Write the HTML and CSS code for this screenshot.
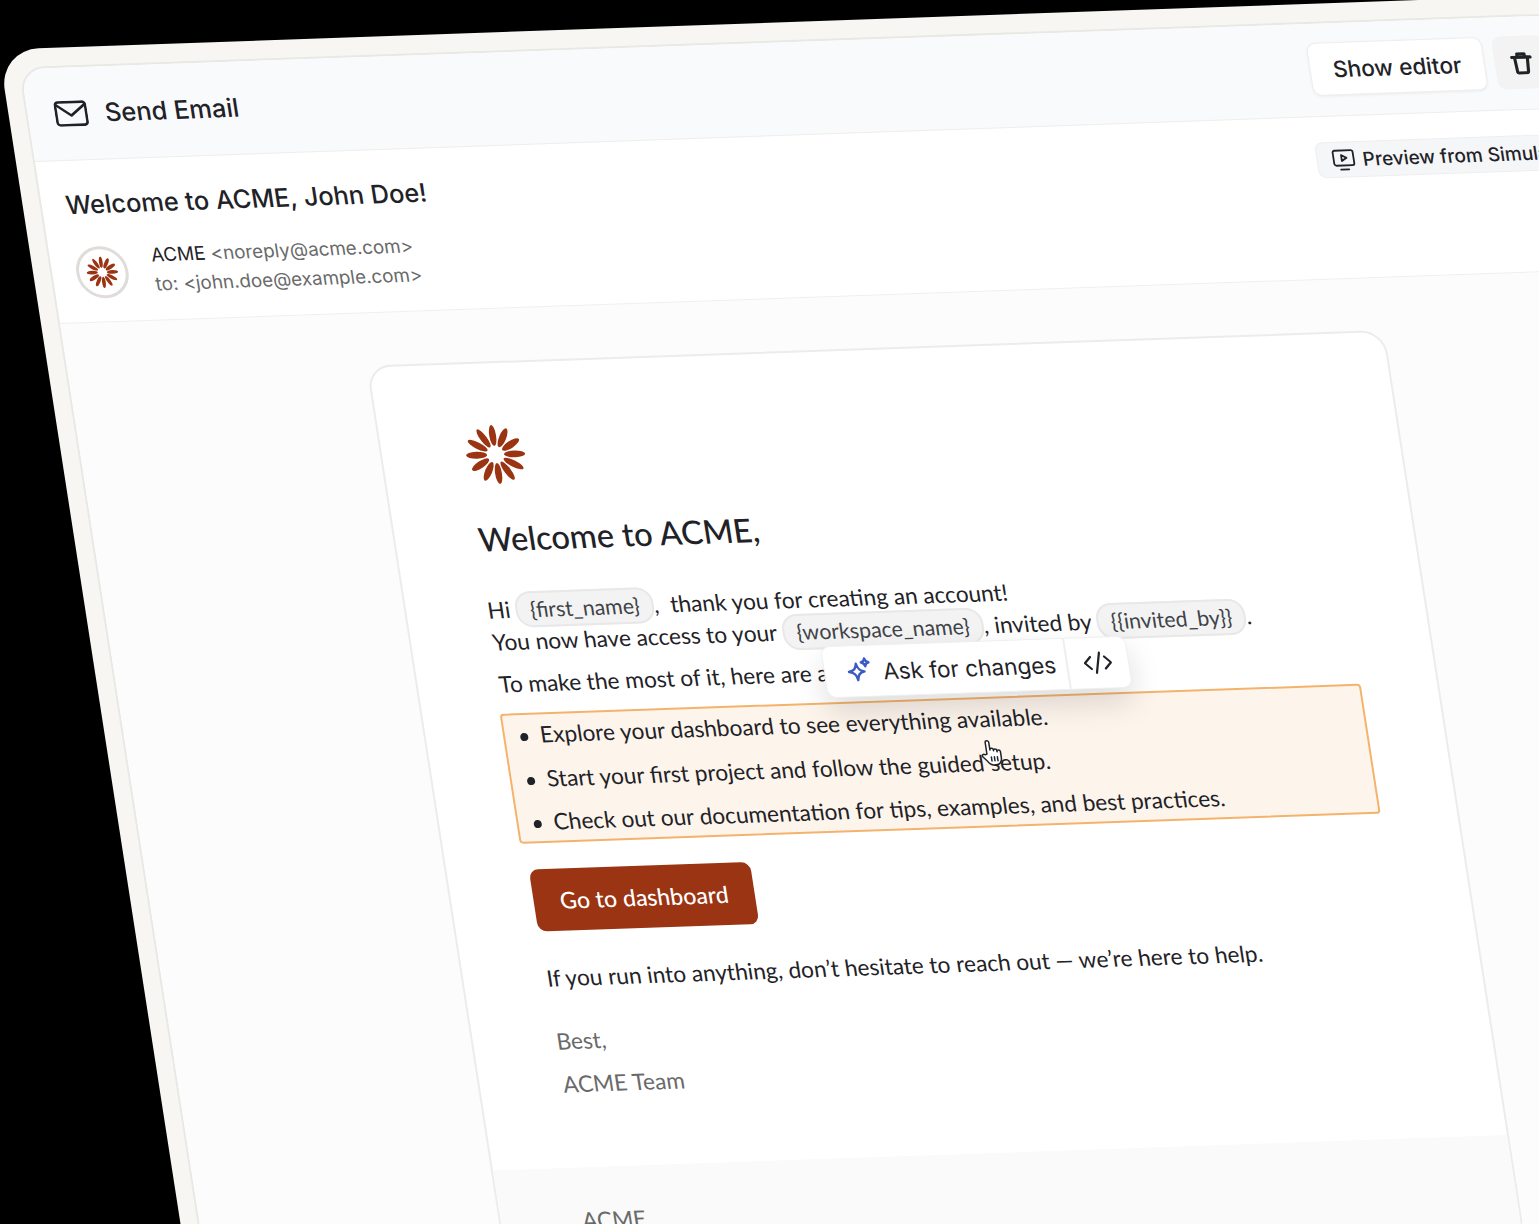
FILE: index.html
```html
<!DOCTYPE html>
<html lang="en">

<head>
    <meta charset="UTF-8">
    <meta name="viewport" content="width=device-width, initial-scale=1.0">
    <title>Send Email</title>
    <link rel="stylesheet" href="styles.css">
</head>

<body>
    <svg class="defs" width="0" height="0">
        <symbol id="flower" viewBox="0 0 60 60">
            <g fill="#9a3412">
                <ellipse cx="30" cy="11" rx="3.4" ry="10.5"/>
                <ellipse cx="30" cy="11" rx="3.4" ry="10.5" transform="rotate(30 30 30)"/>
                <ellipse cx="30" cy="11" rx="3.4" ry="10.5" transform="rotate(60 30 30)"/>
                <ellipse cx="30" cy="11" rx="3.4" ry="10.5" transform="rotate(90 30 30)"/>
                <ellipse cx="30" cy="11" rx="3.4" ry="10.5" transform="rotate(120 30 30)"/>
                <ellipse cx="30" cy="11" rx="3.4" ry="10.5" transform="rotate(150 30 30)"/>
                <ellipse cx="30" cy="11" rx="3.4" ry="10.5" transform="rotate(180 30 30)"/>
                <ellipse cx="30" cy="11" rx="3.4" ry="10.5" transform="rotate(210 30 30)"/>
                <ellipse cx="30" cy="11" rx="3.4" ry="10.5" transform="rotate(240 30 30)"/>
                <ellipse cx="30" cy="11" rx="3.4" ry="10.5" transform="rotate(270 30 30)"/>
                <ellipse cx="30" cy="11" rx="3.4" ry="10.5" transform="rotate(300 30 30)"/>
                <ellipse cx="30" cy="11" rx="3.4" ry="10.5" transform="rotate(330 30 30)"/>
            </g>
        </symbol>
    </svg>

    <div class="stage">
        <div class="panel">
            <header class="panel-head">
                <div class="panel-title">
                    <svg class="mail-icon" viewBox="0 0 33 26" fill="none" stroke="#1f2328" stroke-width="2.6" stroke-linejoin="round" stroke-linecap="round">
                        <rect x="1.5" y="1.5" width="30" height="23" rx="3"/>
                        <path d="M2 4l14.500 11L31 4"/>
                    </svg>
                    <span>Send Email</span>
                </div>
                <div class="panel-actions">
                    <button class="btn-editor">Show editor</button>
                    <button class="btn-trash">
                        <svg viewBox="0 0 24 26" fill="none" stroke="#1f2328" stroke-width="3.4" stroke-linejoin="round" stroke-linecap="round">
                            <path d="M2 7h20"/>
                            <path d="M8 6V3.500h8V6"/>
                            <path d="M5 7l1 15a2 2 0 0 0 2 2h8a2 2 0 0 0 2-2l1-15"/>
                        </svg>
                    </button>
                </div>
            </header>

            <section class="mail-meta">
                <h1 class="mail-subject">Welcome to ACME, John Doe!</h1>
                <div class="mail-from">
                    <div class="avatar">
                        <svg class="avatar-logo"><use href="#flower"/></svg>
                    </div>
                    <div class="from-lines">
                        <p>ACME <span class="muted">&lt;noreply@acme.com&gt;</span></p>
                        <p class="muted">to: &lt;john.doe@example.com&gt;</p>
                    </div>
                </div>
                <button class="btn-preview">
                    <svg viewBox="0 0 24 24" fill="none" stroke="#1f2328" stroke-width="1.800" stroke-linejoin="round" stroke-linecap="round">
                        <rect x="2" y="3" width="20" height="15" rx="2"/>
                        <path d="M10 7.500l5 3-5 3z"/>
                        <path d="M8 22h8"/>
                    </svg>
                    Preview from Simulation
                </button>
            </section>

            <section class="canvas">
                <article class="card">
                    <div class="card-body">
                        <svg class="logo"><use href="#flower"/></svg>
                        <h2 class="greeting">Welcome to ACME,</h2>
                        <p class="line-group">Hi <span class="chip">{first_name}</span>, &nbsp;thank you for creating an account!<br>
                            You now have access to your <span class="chip">{workspace_name}</span>, invited by <span class="chip">{{invited_by}}</span>.</p>
                        <p class="line-tips">To make the most of it, here are a few things to try:</p>
                        <ul class="tips">
                            <li>Explore your dashboard to see everything available.</li>
                            <li>Start your first project and follow the guided setup.</li>
                            <li>Check out our documentation for tips, examples, and best practices.</li>
                        </ul>
                        <a class="btn-go" href="#">Go to dashboard</a>
                        <p class="line-help">If you run into anything, don’t hesitate to reach out — we’re here to help.</p>
                        <p class="sign">Best,</p>
                        <p class="sign sign-team">ACME Team</p>

                        <div class="ask-bar">
                            <div class="ask-main">
                                <svg viewBox="0 0 28 28" fill="none" stroke="#3b5bc4" stroke-width="2.400" stroke-linejoin="round">
                                    <path d="M12 6.500c.8 5 2.600 7 7.500 8-4.900 1-6.700 3-7.500 8.500-.8-5.500-2.600-7.500-8-8.500 5.400-1 7.200-3 8-8z"/>
                                    <path d="M21 1.500c.4 2.500 1.300 3.500 3.800 4-2.500.5-3.400 1.500-3.800 4-.4-2.500-1.300-3.500-3.800-4 2.500-.5 3.400-1.500 3.800-4z"/>
                                </svg>
                                <span>Ask for changes</span>
                            </div>
                            <div class="ask-code">
                                <svg viewBox="0 0 28 24" fill="none" stroke="#1f2328" stroke-width="2.200" stroke-linecap="round" stroke-linejoin="round">
                                    <path d="M7 6l-6 6 6 6"/>
                                    <path d="M21 6l6 6-6 6"/>
                                    <path d="M16.500 2l-5 20"/>
                                </svg>
                            </div>
                        </div>

                        <svg class="hand" viewBox="0 0 24 28" fill="#fff" stroke="#1f2328" stroke-width="1.500" stroke-linejoin="round" stroke-linecap="round">
                            <path d="M6.500 15V3.500a1.800 1.800 0 0 1 3.600 0V11a1.700 1.700 0 0 1 3.400 0v1a1.700 1.700 0 0 1 3.400 0v1a1.700 1.700 0 0 1 3.400 0v6c0 4-2.500 7-6 7h-2.500c-2.500 0-4-1-5.500-3.500L2 17.500c-1-1.800 1.300-3.300 2.600-1.800z"/>
                            <path d="M10.500 18v4M13.500 18v4M16.500 18v4" fill="none"/>
                        </svg>
                    </div>
                    <footer class="card-foot">ACME</footer>
                </article>
            </section>
        </div>
    </div>
</body>

</html>
```

FILE: styles.css
```css
html,
body {
    margin: 0;
    height: 100%;
    overflow: hidden;
    background-color: #000;
}

.defs {
    display: block;
    height: 0;
}

/* whole mock is tilted, everything inside is normal flow */
.stage {
    width: 1614px;
    height: 1400px;
    padding: 18px 17px;
    background-color: #f7f6f3;
    border-radius: 40px 40px 0 0;
    font-family: "Inter", "Liberation Sans", sans-serif;
    color: #1f2328;
    transform-origin: 0 0;
    transform: matrix(1, -0.035, 0.155, 1, -1.5, 49.7);
}

.panel {
    height: 1500px;
    background-color: #fff;
    border: 2.5px solid #e8e8e5;
    border-radius: 26px;
    overflow: hidden;
    box-sizing: border-box;
}

.panel-head {
    display: flex;
    justify-content: space-between;
    align-items: center;
    height: 91.5px;
    padding: 0 90px 0 27px;
    background-color: #f9fafb;
    border-bottom: 1.5px solid #eeeeec;
}

.panel-title {
    display: flex;
    align-items: center;
    gap: 17px;
    font-size: 25.4px;
    font-weight: 500;
}

.mail-icon {
    width: 33px;
    height: 26px;
}

.panel-actions {
    display: flex;
    align-items: center;
    gap: 10px;
}

.btn-editor {
    width: 175px;
    height: 53px;
    background-color: #fff;
    border: 1.5px solid #eeeeee;
    border-radius: 9px;
    font-family: inherit;
    font-size: 22.5px;
    font-weight: 500;
    color: #1f2328;
    box-shadow: 0 1px 3px rgba(0, 0, 0, 0.06);
}

.btn-trash {
    display: flex;
    align-items: center;
    justify-content: center;
    width: 53px;
    height: 53px;
    padding: 0;
    background-color: #f3f3f3;
    border: 0;
    border-radius: 9px;
}

.btn-trash svg {
    width: 22px;
    height: 24px;
}

.mail-meta {
    position: relative;
    height: 162.5px;
    box-sizing: border-box;
    padding: 26.5px 0 0 24px;
    border-bottom: 1.5px solid #efefef;
}

.mail-subject {
    margin: 0;
    font-size: 25.3px;
    line-height: 36px;
    font-weight: 500;
}

.mail-from {
    display: flex;
    align-items: center;
    gap: 25px;
    margin-top: 21px;
}

.avatar {
    display: flex;
    align-items: center;
    justify-content: center;
    width: 52px;
    height: 52px;
    box-sizing: border-box;
    border: 3px solid #dfdcd9;
    border-radius: 50%;
    background-color: #fff;
}

.avatar-logo {
    width: 32px;
    height: 32px;
}

.from-lines p {
    margin: 0;
    font-size: 18.8px;
    line-height: 28.5px;
}

.muted {
    color: #6a6a6a;
}

.btn-preview {
    position: absolute;
    top: 25.5px;
    left: 1275px;
    display: flex;
    align-items: center;
    gap: 7px;
    width: 320px;
    height: 36px;
    padding: 0 14px;
    background-color: #f5f6f8;
    border: 1.5px solid #eeeef0;
    border-radius: 8px;
    font-family: inherit;
    font-size: 19px;
    font-weight: 500;
    color: #1f2328;
    white-space: nowrap;
}

.btn-preview svg {
    width: 24px;
    height: 24px;
    flex: none;
}

.canvas {
    display: flex;
    justify-content: center;
    padding: 52px 0 0 4px;
    background-color: #fcfcfc;
}

.card {
    width: 1018px;
    box-sizing: border-box;
    background-color: #fff;
    border: 2.5px solid #ececea;
    border-radius: 24px;
    font-family: "Lato", "Noto Sans", sans-serif;
    font-size: 22.6px;
}

.card-body {
    position: relative;
    padding: 61px 80px 68px 81px;
}

.logo {
    display: block;
    width: 60px;
    height: 60px;
    margin-left: 2px;
}

.greeting {
    margin: 32px 0 0 2px;
    font-size: 32.6px;
    line-height: 44px;
    font-weight: 500;
}

.line-group {
    margin: 33px 0 0;
    line-height: 31px;
    white-space: nowrap;
}

.chip {
    padding: 3px 12px;
    font-size: 21.3px;
    color: #3f4349;
    background-color: #f3f3f3;
    border: 2px solid #e8e8e8;
    border-radius: 16px;
}

.line-tips {
    margin: 10px 0 0;
    line-height: 31px;
}

.tips {
    margin: 14px 0 0 -4px;
    padding: 0 0 0 15px;
    box-sizing: border-box;
    width: 861px;
    height: 130px;
    background-color: #fdf5ec;
    border: 2.5px solid #f4b36c;
    border-radius: 4px;
    list-style: none;
}

.tips li {
    line-height: 43.5px;
}

.tips li:first-child {
    margin-top: -2px;
}

.tips li::before {
    content: "";
    display: inline-block;
    width: 8px;
    height: 8px;
    margin-right: 12px;
    vertical-align: middle;
    border-radius: 50%;
    background-color: #1f2328;
}

.btn-go {
    display: block;
    width: 221px;
    height: 62px;
    margin: 26px 0 0 1px;
    line-height: 62px;
    text-align: center;
    background-color: #9a3412;
    border-radius: 9px;
    color: #fff;
    font-size: 23px;
    font-weight: 500;
    text-decoration: none;
}

.line-help {
    margin: 31px 0 0 2px;
    line-height: 31px;
}

.sign {
    margin: 32px 0 0 2px;
    line-height: 31px;
    color: #6a6a6a;
}

.sign-team {
    margin-top: 12px;
}

.ask-bar {
    position: absolute;
    top: 293px;
    left: 406px;
    display: flex;
    width: 305px;
    height: 52px;
    background-color: #fff;
    border: 1.5px solid #efefef;
    border-radius: 9px;
    box-shadow: 0 14px 30px rgba(0, 0, 0, 0.13);
    box-sizing: border-box;
    font-family: "Inter", "Liberation Sans", sans-serif;
    font-size: 22.5px;
    white-space: nowrap;
}

.ask-main {
    display: flex;
    align-items: center;
    gap: 10px;
    width: 243px;
    padding-left: 20px;
    box-sizing: border-box;
    border-right: 2px solid #eeeeee;
}

.ask-main svg {
    width: 28px;
    height: 28px;
}

.ask-code {
    display: flex;
    align-items: center;
    justify-content: center;
    flex: 1;
}

.ask-code svg {
    width: 28px;
    height: 24px;
}

.hand {
    position: absolute;
    top: 390px;
    left: 549px;
    width: 24px;
    height: 30px;
}

.card-foot {
    padding: 37px 81px;
    background-color: #fafafa;
    line-height: 31px;
    color: #6a6a6a;
}
```
